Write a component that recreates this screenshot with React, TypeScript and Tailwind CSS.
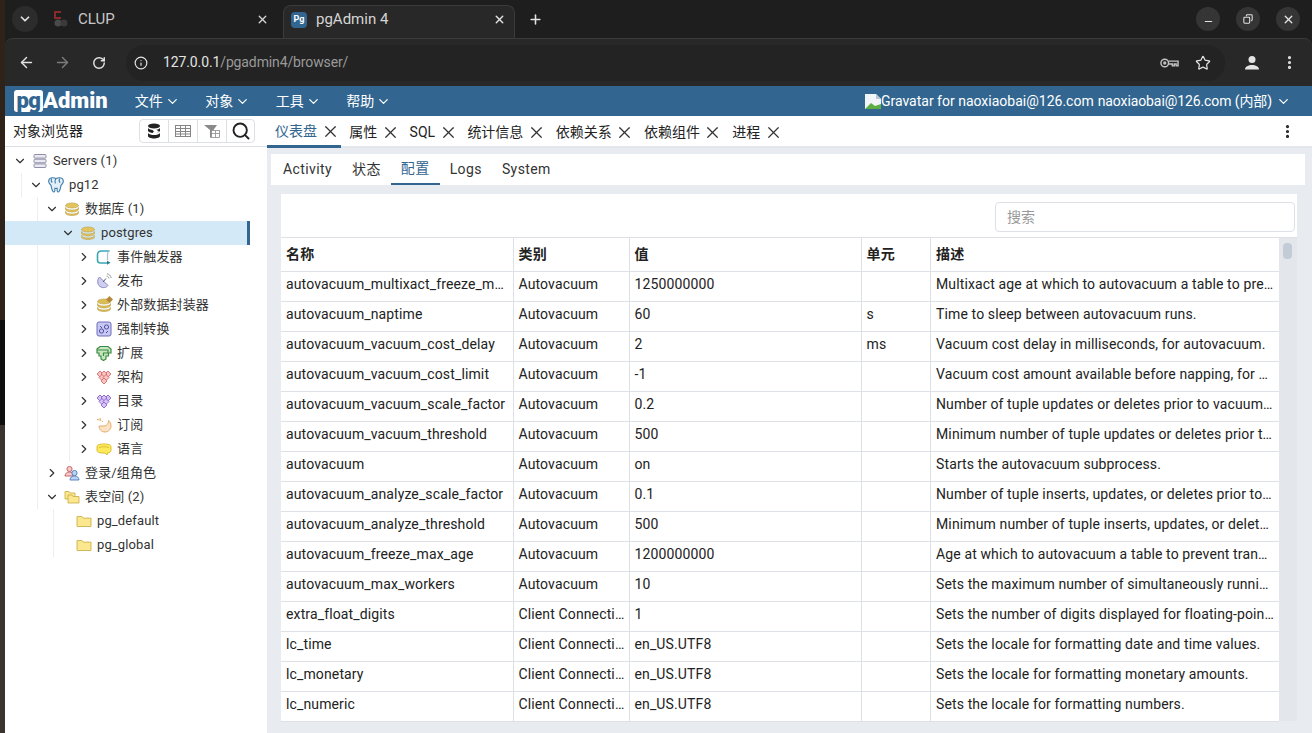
import { ArrowLeft, ArrowRight, ChevronDown, ChevronRight, Copy, EllipsisVertical, Info, Minus, Plus, RotateCw, Search, Star, X } from "lucide-react";
import type { ReactNode } from "react";

const font = "font-['Roboto','Noto_Sans_CJK_SC',sans-serif]";

const rows = [
  ["autovacuum_multixact_freeze_max_age", "Autovacuum", "1250000000", "", "Multixact age at which to autovacuum a table to prevent multixact wraparound."],
  ["autovacuum_naptime", "Autovacuum", "60", "s", "Time to sleep between autovacuum runs."],
  ["autovacuum_vacuum_cost_delay", "Autovacuum", "2", "ms", "Vacuum cost delay in milliseconds, for autovacuum."],
  ["autovacuum_vacuum_cost_limit", "Autovacuum", "-1", "", "Vacuum cost amount available before napping, for autovacuum."],
  ["autovacuum_vacuum_scale_factor", "Autovacuum", "0.2", "", "Number of tuple updates or deletes prior to vacuum as a fraction of reltuples."],
  ["autovacuum_vacuum_threshold", "Autovacuum", "500", "", "Minimum number of tuple updates or deletes prior to vacuum."],
  ["autovacuum", "Autovacuum", "on", "", "Starts the autovacuum subprocess."],
  ["autovacuum_analyze_scale_factor", "Autovacuum", "0.1", "", "Number of tuple inserts, updates, or deletes prior to analyze as a fraction of reltuples."],
  ["autovacuum_analyze_threshold", "Autovacuum", "500", "", "Minimum number of tuple inserts, updates, or deletes prior to analyze."],
  ["autovacuum_freeze_max_age", "Autovacuum", "1200000000", "", "Age at which to autovacuum a table to prevent transaction ID wraparound."],
  ["autovacuum_max_workers", "Autovacuum", "10", "", "Sets the maximum number of simultaneously running autovacuum worker processes."],
  ["extra_float_digits", "Client Connection Defaults", "1", "", "Sets the number of digits displayed for floating-point values."],
  ["lc_time", "Client Connection Defaults", "en_US.UTF8", "", "Sets the locale for formatting date and time values."],
  ["lc_monetary", "Client Connection Defaults", "en_US.UTF8", "", "Sets the locale for formatting monetary amounts."],
  ["lc_numeric", "Client Connection Defaults", "en_US.UTF8", "", "Sets the locale for formatting numbers."],
];

function DbIcon({ color = "#e3c35c" }: { color?: string }) {
  return (
    <svg viewBox="0 0 16 16" className="h-4 w-4">
      <ellipse cx="8" cy="4.5" rx="6.5" ry="2.5" fill={color} stroke="#b9a04a" strokeWidth="0.6" />
      <path d="M1.5 6.500c0 1.400 2.900 2.500 6.500 2.500s6.500-1.100 6.500-2.500v2c0 1.400-2.900 2.500-6.500 2.500s-6.500-1.100-6.500-2.500z" fill={color} stroke="#b9a04a" strokeWidth="0.6" />
      <path d="M1.500 10.500c0 1.400 2.900 2.500 6.500 2.500s6.500-1.100 6.500-2.500v1.500c0 1.400-2.900 2.500-6.500 2.500s-6.500-1.100-6.500-2.500z" fill={color} stroke="#b9a04a" strokeWidth="0.6" />
    </svg>
  );
}

function FolderIcon({ double }: { double?: boolean }) {
  return (
    <svg viewBox="0 0 16 16" className="h-4 w-4">
      {double && <path d="M1 2.500h4l1 1.500h5v6H1z" fill="#fbe88e" stroke="#c9a93f" strokeWidth="0.8" />}
      <path d={double ? "M4 6h4l1 1.500h6v6.500H4z" : "M1 3.500h5l1.200 1.600H15v8.400H1z"} fill="#fbe88e" stroke="#c9a93f" strokeWidth="0.8" />
    </svg>
  );
}

function ServersIcon() {
  return (
    <svg viewBox="0 0 16 16" className="h-4 w-4" fill="#e9e9f2" stroke="#8f8fa8" strokeWidth="1">
      <rect x="2" y="1.500" width="12" height="3.600" rx="1" />
      <rect x="2" y="6.200" width="12" height="3.600" rx="1" />
      <rect x="2" y="10.900" width="12" height="3.600" rx="1" />
    </svg>
  );
}

function ElephantIcon() {
  return (
    <svg viewBox="0 0 16 16" className="h-4 w-4" fill="#e3eff8" stroke="#3f7ba8" strokeWidth="1.100">
      <path d="M4 .8c1.500-.2 2.800.2 4 .8 1.200-.6 2.500-1 4-.8 2 .3 3.500 1.500 3.300 3.800-.1 1.400-1.100 2.300-2 3.300-.6.800-.5 2-.9 3.200-.4 1.400-.9 3.900-2.200 3.900-1.200 0-1.100-2.400-1.100-3.700-.7.200-1.500.2-2.200 0 0 1.300.1 3.700-1.100 3.700-1.300 0-1.800-2.500-2.200-3.900C3.200 9.900 3.300 8.700 2.700 7.900 1.800 6.900.8 6 .7 4.600.5 2.300 2 1.100 4 .8z" />
      <path d="M7.800 1.700c-1 1.500-1 3.200-.4 4.800M11.800 1.500c-.9 1.200-.7 3 .2 4.300M3.500 1.500c-.6 1.500-.3 3 .7 4" fill="none" />
    </svg>
  );
}

function TriggerIcon() {
  return (
    <svg viewBox="0 0 16 16" className="h-4 w-4" fill="none" stroke="#3aa7b4" strokeWidth="1.600">
      <path d="M13.500 2H5.500C3.300 2 1.500 3.500 1.500 6v5c0 1.700 1.200 3 3 3H11" />
      <path d="M13.500 2c-1.300.5-2 1.600-2 3.200V11" stroke="#a9c3d0" strokeWidth="1.300" />
      <path d="M11 11.500l3.500 2.200-3.500 2z" fill="#2a7f8c" stroke="none" />
    </svg>
  );
}

function PubIcon() {
  return (
    <svg viewBox="0 0 16 16" className="h-4 w-4">
      <path d="M3.500 4C.8 7 1.300 11.500 4 13.500c2.800 2 6.500 1.200 8-1z" fill="#cfcef0" stroke="#7e7dbc" strokeWidth="0.9" />
      <path d="M7 9l3-3.500" stroke="#55548f" strokeWidth="1" />
      <path d="M10.500 3c1.300.2 2.300 1.200 2.500 2.500M11 .8c2.200.3 3.900 2 4.200 4.200" fill="none" stroke="#8c8c8c" strokeWidth="0.9" />
    </svg>
  );
}

function FdwIcon() {
  return (
    <div className="relative h-4 w-4">
      <DbIcon color="#dbbd55" />
      <span className="absolute right-0 top-0 h-[5px] w-[5px] rotate-45 bg-[#b6893a]" />
    </div>
  );
}

function CastIcon() {
  return (
    <svg viewBox="0 0 16 16" className="h-4 w-4" fill="none">
      <rect x="1" y="1" width="14" height="14" rx="2" fill="#c9c8f0" stroke="#6d6cc0" />
      <circle cx="5.500" cy="10" r="2.100" stroke="#4e4da8" />
      <circle cx="10.500" cy="6" r="2.100" stroke="#4e4da8" />
      <path d="M4 5l2 2M12 10l-2 2" stroke="#4e4da8" />
    </svg>
  );
}

function ExtIcon() {
  return (
    <svg viewBox="0 0 16 16" className="h-4 w-4">
      <path d="M1 4l3-2.500h8l3 2.500v4h-2.500v3H10v3l-2.500 1.500L5 14v-3H3V8H1z" fill="#c4e6c2" stroke="#3c8a3f" strokeWidth="1.200" />
      <path d="M1 5h11v3H7.500v3" fill="none" stroke="#3c8a3f" strokeWidth="1.200" />
    </svg>
  );
}

function DiamondsIcon({ fill, stroke }: { fill: string; stroke: string }) {
  const diamonds = [[4, 5], [12, 5], [8, 5], [6, 8.500], [10, 8.500], [8, 12]];
  return (
    <svg viewBox="0 0 16 16" className="h-4 w-4">
      {diamonds.map(([x, y]) => (
        <path key={`${x}-${y}`} d={`M${x} ${y - 3}l3 3-3 3-3-3z`} fill={fill} stroke={stroke} strokeWidth="0.9" />
      ))}
    </svg>
  );
}

function SubIcon() {
  return (
    <svg viewBox="0 0 16 16" className="h-4 w-4">
      <path d="M3 9c0 3.500 2.500 6 6 6 3.500 0 6-2.800 6-6 0-2.500-1-4.500-2.500-5.500.4 2.500-1.500 5.500-4.500 5.500z" fill="#fbe2c4" stroke="#dfa55e" strokeWidth="0.9" />
      <path d="M1 2.500l3 .5M4 1l1 3M7 5l-1-1" stroke="#dfa55e" strokeWidth="0.9" fill="none" />
    </svg>
  );
}

function LangIcon() {
  return (
    <svg viewBox="0 0 16 16" className="h-4 w-4">
      <path d="M1 5.500C1 3.800 4 3 8 3s7 .8 7 2.500v4c0 1.400-1.500 2.200-3.500 2.500l-.5 2-2-2H6c-3 0-5-1-5-2.500z" fill="#fde95a" stroke="#d6b92c" strokeWidth="0.9" />
      <path d="M3 6.500c2.500-1 7-1 10 0" fill="none" stroke="#d6b92c" strokeWidth="0.9" />
    </svg>
  );
}

function RolesIcon() {
  return (
    <svg viewBox="0 0 16 16" className="h-4 w-4">
      <circle cx="5.500" cy="4" r="2.600" fill="#f7c9c9" stroke="#c05c5c" strokeWidth="0.9" />
      <path d="M1 11c0-2.500 2-4 4.500-4S9 8 9 11z" fill="#f7c9c9" stroke="#c05c5c" strokeWidth="0.9" />
      <circle cx="10.500" cy="8" r="2.600" fill="#bcd4f3" stroke="#4c78bd" strokeWidth="0.9" />
      <path d="M6 15c0-2.500 2-4 4.500-4s4.500 1.500 4.500 4z" fill="#bcd4f3" stroke="#4c78bd" strokeWidth="0.9" />
    </svg>
  );
}

type TreeItem = {
  depth: number;
  label: string;
  icon: ReactNode;
  toggle?: "open" | "closed";
  guides?: number[];
  selected?: boolean;
};

const tree: TreeItem[] = [
  { depth: 0, label: "Servers (1)", icon: <ServersIcon />, toggle: "open" },
  { depth: 1, label: "pg12", icon: <ElephantIcon />, toggle: "open", guides: [0] },
  { depth: 2, label: "数据库 (1)", icon: <DbIcon />, toggle: "open", guides: [1] },
  { depth: 3, label: "postgres", icon: <DbIcon />, toggle: "open", selected: true },
  { depth: 4, label: "事件触发器", icon: <TriggerIcon />, toggle: "closed", guides: [1, 3] },
  { depth: 4, label: "发布", icon: <PubIcon />, toggle: "closed", guides: [1, 3] },
  { depth: 4, label: "外部数据封装器", icon: <FdwIcon />, toggle: "closed", guides: [1, 3] },
  { depth: 4, label: "强制转换", icon: <CastIcon />, toggle: "closed", guides: [1, 3] },
  { depth: 4, label: "扩展", icon: <ExtIcon />, toggle: "closed", guides: [1, 3] },
  { depth: 4, label: "架构", icon: <DiamondsIcon fill="#f8c5c5" stroke="#d96a6a" />, toggle: "closed", guides: [1, 3] },
  { depth: 4, label: "目录", icon: <DiamondsIcon fill="#d5c5f5" stroke="#8a63cf" />, toggle: "closed", guides: [1, 3] },
  { depth: 4, label: "订阅", icon: <SubIcon />, toggle: "closed", guides: [1, 3] },
  { depth: 4, label: "语言", icon: <LangIcon />, toggle: "closed", guides: [1, 3] },
  { depth: 2, label: "登录/组角色", icon: <RolesIcon />, toggle: "closed", guides: [1] },
  { depth: 2, label: "表空间 (2)", icon: <FolderIcon double />, toggle: "open", guides: [1] },
  { depth: 3, label: "pg_default", icon: <FolderIcon />, guides: [2] },
  { depth: 3, label: "pg_global", icon: <FolderIcon />, guides: [2] },
];

function TreeRow({ item }: { item: TreeItem }) {
  const cells = Array.from({ length: item.depth }, (_, i) => i);
  return (
    <div className={`flex h-6 w-[245px] items-center text-[13px] tracking-[0.13px] text-[#333] ${item.selected ? "bg-[#d3e9f7]" : ""}`}>
      <div className="w-[7px] shrink-0" />
      {cells.map((i) => (
        <div key={i} className="h-full w-4 shrink-0">
          {item.guides?.includes(i) && <div className="ml-[9px] h-full border-l border-[#eceef1]" />}
        </div>
      ))}
      <div className="flex w-4 shrink-0 justify-center text-[#333]">
        {item.toggle === "open" && <ChevronDown size={14} strokeWidth={2} />}
        {item.toggle === "closed" && <ChevronRight size={14} strokeWidth={2} />}
      </div>
      <div className={item.toggle ? "ml-1 shrink-0" : "shrink-0"}>{item.icon}</div>
      <span className="ml-[5px] truncate">{item.label}</span>
      {item.selected && <div className="ml-auto h-full w-[3px] bg-[#326690]" />}
    </div>
  );
}

function ToolbarButton({ children }: { children: ReactNode }) {
  return <div className="flex h-full w-[29px] items-center justify-center border-r border-[#dde0e6]">{children}</div>;
}

function DbToolIcon() {
  return (
    <svg viewBox="0 0 16 16" className="h-4 w-4" fill="#222">
      <ellipse cx="8" cy="3" rx="6" ry="2.500" />
      <path d="M2 5c1 1.600 3.500 2 6 2s5-.4 6-2v3c-1 1.600-3.500 2-6 2s-5-.4-6-2zM2 10c1 1.600 3.500 2 6 2s5-.4 6-2v3c0 1.500-3 2.500-6 2.500S2 14.500 2 13z" />
      <path d="M6 6.500h4l3 2-3 2H6l2-2z" fill="#fff" />
    </svg>
  );
}

function GridIcon() {
  return (
    <svg viewBox="0 0 16 16" className="h-4 w-4" fill="none" stroke="#858585" strokeWidth="1">
      <rect x="0.500" y="2.500" width="15" height="11" />
      <path d="M0.500 5.500h15M0.500 8.500h15M0.500 11h15M5.500 2.500v11M10.500 2.500v11" />
    </svg>
  );
}

function FilterTableIcon() {
  return (
    <svg viewBox="0 0 16 16" className="h-4 w-4">
      <path d="M0 2h13L9.500 7v6L6 15V7z" fill="#8a8a8a" />
      <rect x="7.500" y="7.500" width="8" height="7" fill="#fff" stroke="#8a8a8a" strokeWidth="0.8" />
      <path d="M7.500 10.500h8M11.500 7.500v7" stroke="#8a8a8a" strokeWidth="0.8" />
    </svg>
  );
}

function ProfileIcon() {
  return (
    <svg viewBox="0 0 16 16" className="h-4 w-4" fill="#e3e3e3">
      <circle cx="8" cy="4.500" r="3.500" />
      <path d="M1 14.500c0-3 3.500-4.500 7-4.500s7 1.500 7 4.500z" />
    </svg>
  );
}

function BrowserChrome() {
  return (
    <>
      <div className="flex h-[38px] items-end bg-[#1e1e1e] text-[15px] text-[#c7c7c7]">
        <div className="mb-[6px] ml-[7px] flex h-[26px] w-[26px] items-center justify-center self-end rounded-full bg-[#2c2c2c]">
          <ChevronDown size={14} strokeWidth={3} className="text-[#e3e3e3]" />
        </div>
        <div className="ml-[14px] flex h-[33px] w-[231px] items-center pb-[5px] pr-[14px]">
          <svg viewBox="0 0 16 16" className="h-4 w-4 shrink-0">
            <rect x="2" y="0" width="7" height="8" fill="#8a2a2a" />
            <rect x="4" y="2" width="5" height="4" fill="#1e1e1e" />
            <circle cx="6" cy="12" r="3.500" fill="#4a4a4a" />
            <circle cx="12" cy="12" r="3.500" fill="#3a3a3a" />
          </svg>
          <span className="ml-[10px]">CLUP</span>
          <X size={13} strokeWidth={2.500} className="ml-auto text-[#d5d5d5]" />
        </div>
        <div className="flex h-[33px] w-[232px] items-center rounded-t-lg border border-b-0 border-[#3b3b3b] bg-[#282828] pb-[5px] pl-[7px] pr-[8px] text-[#d5d5d5]">
          <div className="flex h-4 w-4 shrink-0 items-center justify-center rounded-sm bg-[#326690] text-[9px] font-bold text-white">Pg</div>
          <span className="ml-[9px]">pgAdmin 4</span>
          <X size={13} strokeWidth={2.500} className="ml-auto text-[#e3e3e3]" />
        </div>
        <Plus size={15} strokeWidth={2.500} className="mb-[11px] ml-[13px] text-[#e3e3e3]" />
        <div className="mb-[7px] ml-auto flex items-center gap-4 pr-[12px]">
          <div className="flex h-6 w-6 items-center justify-center rounded-full bg-[#353535]"><Minus size={11} strokeWidth={2.500} className="mt-[4px] text-[#e3e3e3]" /></div>
          <div className="flex h-6 w-6 items-center justify-center rounded-full bg-[#353535]"><Copy size={10} strokeWidth={2.500} className="-scale-x-100 text-[#e3e3e3]" /></div>
          <div className="flex h-6 w-6 items-center justify-center rounded-full bg-[#353535]"><X size={13} strokeWidth={2.500} className="text-[#e3e3e3]" /></div>
        </div>
      </div>
      <div className="flex h-[48px] items-center rounded-tl-lg rounded-tr-lg border-t border-[#3b3b3b] bg-[#282828] pl-[13px] pr-[14px] text-[#e3e3e3]">
        <ArrowLeft size={17} strokeWidth={2} />
        <ArrowRight size={17} strokeWidth={2} className="ml-[19px] text-[#7c7c7c]" />
        <RotateCw size={14} strokeWidth={2.500} className="ml-[21px]" />
        <div className="ml-[20px] flex h-[36px] flex-1 items-center rounded-full bg-[#232323] pl-[8px] pr-[14px]">
          <Info size={14} strokeWidth={2} />
          <span className="ml-[15px] text-[14px] tracking-[-0.12px] text-[#e3e3e3]">127.0.0.1<span className="text-[#9a9a9a]">/pgadmin4/browser/</span></span>
          <svg viewBox="0 0 20 12" className="ml-auto h-[12px] w-[19px]" fill="none" stroke="#c4c4c4" strokeWidth="1.500">
            <circle cx="5" cy="6" r="4" />
            <circle cx="5" cy="6" r="1" />
            <path d="M9 4h10v5h-2V7h-2v2h-2V7H9" />
          </svg>
          <Star size={16} strokeWidth={1.800} className="ml-[16px]" />
        </div>
        <div className="ml-[19px]"><ProfileIcon /></div>
        <EllipsisVertical size={17} strokeWidth={2.500} className="ml-[21px]" />
      </div>
    </>
  );
}

function NavBar() {
  const menus = ["文件", "对象", "工具", "帮助"];
  return (
    <div className="flex h-[30px] items-center bg-[#326690] pl-[9px] pr-[21px] text-[14px] text-white">
      <div className="flex h-[22px] w-[29px] items-center justify-center rounded-[3px] bg-white text-[22px] font-black leading-none tracking-[-0.5px] text-[#326690]">pg</div>
      <span className="text-[22px] font-black leading-none">Admin</span>
      <div className="ml-[27px] flex gap-[25.5px]">
        {menus.map((m) => (
          <div key={m} className="flex items-center gap-[2px]">
            {m}
            <ChevronDown size={15} strokeWidth={2} />
          </div>
        ))}
      </div>
      <div className="ml-auto flex items-center">
        <svg viewBox="0 0 16 16" className="h-4 w-4">
          <path d="M0 1h11l5 5v10H0z" fill="#f1f4f8" />
          <path d="M11 1l5 5h-5z" fill="#b9c4cf" />
          <path d="M0 16l6-6 4 3 6-2v5z" fill="#5cae44" />
        </svg>
        <span>Gravatar for naoxiaobai@126.com</span>
        <span className="ml-[4px] tracking-[-0.1px]">naoxiaobai@126.com (内部)</span>
        <ChevronDown size={15} strokeWidth={2} className="ml-[4px]" />
      </div>
    </div>
  );
}

function LeftPanel() {
  return (
    <div className="flex w-[262px] shrink-0 flex-col bg-white">
      <div className="flex h-[31px] items-center justify-between border-b border-[#dde0e6] pl-2 pr-[12px] text-[14px] text-[#222]">
        <span>对象浏览器</span>
        <div className="flex h-6 items-center overflow-hidden rounded border border-[#dde0e6]">
          <ToolbarButton><DbToolIcon /></ToolbarButton>
          <ToolbarButton><GridIcon /></ToolbarButton>
          <ToolbarButton><FilterTableIcon /></ToolbarButton>
          <div className="flex h-full w-[27px] items-center justify-center"><Search size={20} strokeWidth={2.300} className="text-[#222]" /></div>
        </div>
      </div>
      <div className="pt-[2px]">
        {tree.map((item) => (
          <TreeRow key={item.label} item={item} />
        ))}
      </div>
    </div>
  );
}

function PanelTabs() {
  const tabs = ["仪表盘", "属性", "SQL", "统计信息", "依赖关系", "依赖组件", "进程"];
  return (
    <div className="flex h-[32px] items-stretch border-b-[2px] border-[#e3e7ec] bg-white text-[14px] text-[#222]">
      {tabs.map((t, i) => (
        <div key={t} className={`flex items-center gap-[6px] whitespace-nowrap pl-2 pr-[4.3px] pt-[2px] ${i === 0 ? "-mb-[2px] border-b-[3px] border-[#326690] text-[#326690]" : ""}`}>
          <span>{t}</span>
          <X size={19} strokeWidth={1.500} className="-mx-[2.5px] shrink-0 text-[#333]" />
        </div>
      ))}
      <EllipsisVertical size={17} strokeWidth={2.500} className="ml-auto mr-[16px] self-center text-[#222]" />
    </div>
  );
}

function SubTabs() {
  const tabs = ["Activity", "状态", "配置", "Logs", "System"];
  return (
    <div className="flex h-[31px] items-stretch bg-white pl-[2px] text-[14px] tracking-[0.4px] text-[#333]">
      {tabs.map((t) => (
        <div key={t} className={`flex items-center px-[10px] ${t === "配置" ? "border-b-2 border-[#326690] text-[#326690]" : ""}`}>{t}</div>
      ))}
    </div>
  );
}

function ConfigTable() {
  const cols = ["w-[232px]", "w-[116px]", "w-[232px]", "w-[69.5px]", "w-[348.5px]"];
  const heads = ["名称", "类别", "值", "单元", "描述"];
  return (
    <div className="flex min-h-0 flex-1 border-t border-[#dde0e6]">
      <table className="w-[998px] shrink-0 table-fixed border-collapse self-start bg-white text-[14px] tracking-[0.13px] text-[#222]">
        <colgroup>
          {cols.map((c) => (
            <col key={c} className={c} />
          ))}
        </colgroup>
        <thead>
          <tr className="h-[33px] border-b border-[#dde0e6]">
            {heads.map((h, i) => (
              <th key={h} className={`px-[5px] text-left font-bold ${i < 4 ? "border-r border-[#dde0e6]" : ""}`}>{h}</th>
            ))}
          </tr>
        </thead>
        <tbody>
          {rows.map((r) => (
            <tr key={r[0]} className="h-[30px] border-b border-[#dde0e6]">
              {r.map((c, i) => (
                <td key={i} className={`truncate pb-[4px] pl-[5px] ${i < 4 ? "border-r border-[#dde0e6] pr-[3px]" : "pr-[5px]"}`}>{c}</td>
              ))}
            </tr>
          ))}
        </tbody>
      </table>
      <div className="flex-1 bg-[#e3e7ec] pl-[4px] pt-[5px]">
        <div className="h-4 w-[9px] rounded bg-[#c3cbd6]" />
      </div>
    </div>
  );
}

export default function App() {
  return (
    <div className={`flex h-[733px] w-[1312px] overflow-hidden bg-[#1e1e1e] ${font}`}>
      <div className="flex w-[5px] shrink-0 flex-col">
        <div className="h-[320px] bg-[#2e2219]" />
        <div className="h-[105px] bg-[#0e0e0e]" />
        <div className="flex-1 bg-[#3a3330]" />
      </div>
      <div className="flex min-w-0 flex-1 flex-col">
        <BrowserChrome />
        <NavBar />
        <div className="flex min-h-0 flex-1">
          <LeftPanel />
          <div className="flex min-w-0 flex-1 flex-col bg-[#e8ecf0]">
            <PanelTabs />
            <div className="flex min-h-0 flex-1 flex-col pb-[12px] pl-[4px] pr-[7px] pt-[6px]">
              <SubTabs />
              <div className="flex min-h-0 flex-1 flex-col pl-[10px] pr-[8px] pt-[9px]">
                <div className="flex h-[43px] justify-end bg-white pr-[2px] pt-[8px]">
                  <input placeholder="搜索" className="h-[30px] w-[300px] rounded border border-[#dde0e6] bg-white px-[11px] text-[14px] placeholder:text-[#999]" />
                </div>
                <ConfigTable />
              </div>
            </div>
          </div>
        </div>
      </div>
    </div>
  );
}
